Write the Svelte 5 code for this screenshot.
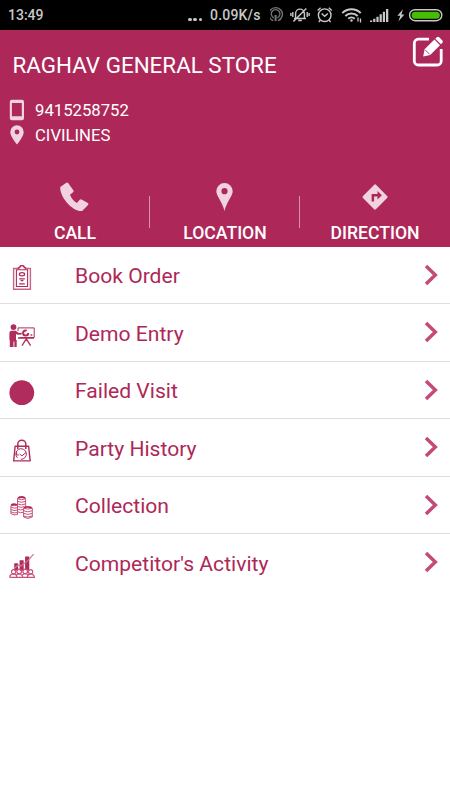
<script lang="ts">
interface MenuItem {
  icon: string;
  label: string;
}

const actions = ['CALL', 'LOCATION', 'DIRECTION'];

const items: MenuItem[] = [
  { icon: 'order', label: 'Book Order' },
  { icon: 'demo', label: 'Demo Entry' },
  { icon: 'failed', label: 'Failed Visit' },
  { icon: 'history', label: 'Party History' },
  { icon: 'collection', label: 'Collection' },
  { icon: 'activity', label: "Competitor's Activity" },
];
</script>

<main class="screen">
  <div class="status">
    <span class="time">13:49</span>
    <span class="dots"><i></i><i></i><i></i></span>
    <span class="speed">0.09K/s</span>
    <svg class="status-icons" width="180" height="30" viewBox="0 0 180 30" fill="none" stroke="#c8c8c8" aria-hidden="true">
      <g stroke="#777" stroke-width="1.3">
        <path d="M3.2 20.7a6.8 6.8 0 1 1 4.8 0M3.8 17.8a4.3 4.3 0 1 1 3.6 0" />
        <path d="M5.6 15v6" stroke-width="2" />
      </g>
      <g stroke-width="1.4">
        <path d="M24 18.5h12M25.6 18v-4.5a4.4 4.4 0 0 1 8.8 0V18M28.2 20.5h3.6M23.4 21.5 36.3 8.5" />
        <path d="M22.8 12v5M37.2 12v5M20.9 13v3M39.1 13v3" />
      </g>
      <g stroke-width="1.4">
        <circle cx="54.7" cy="15.2" r="6.3" />
        <path d="m51.6 13.4 3.1 2.8 3.1-2.8M47.6 10.4l3-2.7M61.8 10.4l-3-2.7M50.3 20.3l-1.5 1.6M59.1 20.3l1.5 1.6" />
      </g>
      <g stroke-width="2">
        <path d="M72.3 13.1a13 13 0 0 1 18.4 0M75.3 16a8.8 8.8 0 0 1 12.4 0M78.3 18.8a4.6 4.6 0 0 1 6.4 0" />
        <circle cx="81.5" cy="20.5" r="1.2" fill="#c8c8c8" stroke="none" />
        <path d="M88 17.5v4M90.5 18.5v4" stroke-width="1.3" />
      </g>
      <g fill="#c8c8c8" stroke="none">
        <path d="M100 20.5h2.2V22H100zM103.2 18.7h2.2V22h-2.2zM106.4 16.7h2.2V22h-2.2zM109.6 14.3h2.2V22h-2.2zM112.8 11.7h2.2V22h-2.2zM116 9h2.3v13H116z" />
        <path d="m133 9.2-5.6 6.5h2.9l-1.9 5.7 6-7h-3z" />
      </g>
      <rect x="139.6" y="9.7" width="32.2" height="11" rx="5.5" stroke-width="1.4" />
      <rect x="141.6" y="11.7" width="28.2" height="7" rx="3.5" fill="#48bd05" stroke="none" />
    </svg>
  </div>

  <header class="header">
    <div class="title-row">
      <h1>RAGHAV GENERAL STORE</h1>
      <svg class="edit" width="32" height="32" viewBox="0 0 32 32" aria-hidden="true">
        <path d="M17 3.2H6.3a4 4 0 0 0-4 4V25a4 4 0 0 0 4 4h18.9a4 4 0 0 0 4-4V13" fill="none" stroke="#fff" stroke-width="2.8" />
        <path d="m11.2 20.5 1.4-7.2L22.4 3.6l5.6 5.6-9.8 9.8zM23.3 2.7l1.5-1.5q1.2-1 2.4 0l3.2 3.2q1 1.2 0 2.4l-1.5 1.5z" fill="#fff" />
        <path d="m13.3 14 4.4 4.4" stroke="#ad2858" stroke-width=".9" />
      </svg>
    </div>

    <div class="contact">
      <div class="contact-row">
        <svg width="16" height="22" viewBox="0 0 16 22" aria-hidden="true">
          <path fill-rule="evenodd" d="M2.8.8h10.2a2 2 0 0 1 2 2v16.4a2 2 0 0 1-2 2H2.8a2 2 0 0 1-2-2V2.8a2 2 0 0 1 2-2zM2.9 4v13.3h9.9V4z" />
        </svg>
        <span>9415258752</span>
      </div>
      <div class="contact-row">
        <svg width="16" height="22" viewBox="0 0 16 22" aria-hidden="true">
          <path fill-rule="evenodd" d="M8 1.3a6.7 6.7 0 0 0-6.7 6.7C1.3 13 8 20.4 8 20.4S14.7 13 14.7 8A6.7 6.7 0 0 0 8 1.3zm0 4.3a2.4 2.4 0 1 1 0 4.8 2.4 2.4 0 0 1 0-4.8z" />
        </svg>
        <span>CIVILINES</span>
      </div>
    </div>

    <nav class="actions">
      {#each actions as action}
        <button class="action" type="button">
          <svg width="32" height="32" viewBox="0 0 32 32" aria-hidden="true">
            {#if action === 'CALL'}
              <path d="m7.3 1.7-6 4.2c-.9 9.3 11.7 24.7 21.9 24.1l5.8-6c.6-.7.5-1.5-.2-2l-6.3-3.4q-1-.6-1.8.2l-2.8 3.1c-3.1-1.7-5.7-5-6.9-8.2l3-2.4q1-.8.5-1.9L9.1 2q-.6-1-1.8-.3z" />
            {:else if action === 'LOCATION'}
              <path fill-rule="evenodd" d="M15.5 2a8.2 8.2 0 0 0-8.2 8.2c0 4.8 5.8 9.8 8.2 19.8 2.4-10 8.2-15 8.2-19.8A8.2 8.2 0 0 0 15.5 2zm0 5.1a3.1 3.1 0 1 1 0 6.2 3.1 3.1 0 0 1 0-6.2z" />
            {:else}
              <path fill-rule="evenodd" d="m17.2 3.9 10.9 11q1.1 1.1 0 2.2l-11 11q-1.1 1.1-2.2 0L4 17.1q-1.1-1.1 0-2.2l11-11q1.1-1.1 2.2 0zM12.6 13v7.5h2.5v-5h3.4v3l4.4-4.3-4.4-4.3V13z" />
            {/if}
          </svg>
          <span>{action}</span>
        </button>
      {/each}
    </nav>
  </header>

  <ul class="menu">
    {#each items as item}
      <li>
        <svg class="icon" width="28" height="28" viewBox="0 0 28 28" fill="none" stroke="#b02c5c" aria-hidden="true">
          {#if item.icon === 'order'}
            <path d="M9.5 3.5H5.6v20.8h16.8V3.5h-3.7" stroke="#c76587" stroke-width="1.4" />
            <path d="M10 4.8H8.4v16.7h11.2V4.8H18M10 4.8h8" stroke-width="1.1" />
            <path d="M10.3 4.4V3q1.5 0 2-1.7 1.7-1.7 3.4 0Q16.2 3 17.7 3v1.4" stroke-width="1.6" />
            <ellipse cx="14" cy="9.3" rx="2.6" ry="1.6" stroke-width="1.3" />
            <path d="M11.2 13.8h5.6M12.6 15.7h2.8M11.2 18.8h5.6" stroke-width="1.2" />
          {:else if item.icon === 'demo'}
            <g fill="#b02c5c" stroke="none">
              <circle cx="5.5" cy="4.1" r="2.9" />
              <path d="M1.4 10q0-2.2 2.3-2.2h4.1l2.9 2.3 3-.4v1.7l-4 .4-1.7-.9V17h.7v7H6.4v-5.5h-.9V24H1.8v-7h-.4z" />
            </g>
            <path d="M10 4.9h16.2v9.6H11.8M10 4.9v3" />
            <path d="M10 15h16M18.3 15v2M18 16.4l-4 6.2M18.6 16.4l4 6.2" stroke-width="1.3" />
            <circle cx="17.7" cy="10" r="2.6" stroke-width="2" stroke-dasharray="13 3.3" />
            <path d="M22.6 12h1.7" stroke-width="1.5" />
          {:else if item.icon === 'failed'}
            <circle cx="13.8" cy="12.7" r="12.4" fill="#b02c5c" stroke="none" />
          {:else if item.icon === 'history'}
            <path d="M7.1 8.2h13.5l1.6 14.7H5.7z" stroke-width="1.4" stroke-linejoin="round" />
            <path d="M9.8 11V6.2a4 4 0 0 1 8 0V11" stroke-width="1.5" />
            <path d="M9.4 19.8a5.3 5.3 0 1 1 3.4 1.5M8.6 14v3h2.2M11.6 16l2.4 1.8 4-3.4" stroke-width="1" />
          {:else if item.icon === 'collection'}
            <g stroke-width="1">
              <path d="M9.5 3.2v16.2M17.6 3.2v8M2.9 10.7v8q3 2 6.7.8M2.9 10.7l6.6-.7M9.5 3.7q4 2 8 0M9.5 6.3q4 2 8 0M9.5 8.9q4 2 8 0M9.5 11.4q4 2 7 0M9.5 14q3 1.7 6 .5M9.5 16.7q3 1.7 6 .5M2.9 12q3 2 6.6.7M2.9 14.4q3 2 6.6.7M2.9 16.8q3 2 6.6.7" stroke="#c8527a" />
              <path d="M15.6 13v9q4 3 8.7 0v-9M15.6 13q4 2.3 8.7 0M15.6 15.7q4 2.3 8.7 0M15.6 18.3q4 2.3 8.7 0M15.6 20.9q4 2.3 8.7 0" stroke="#c8527a" />
              <path d="M10 3q3.5-2 7.2 0M3.2 10q2.7-1.5 5.8 0M16 12.8q3.5-2 7.8 0" stroke-width="1.8" />
            </g>
          {:else}
            <g fill="#b02c5c" stroke="none">
              <path d="M6.2 10.2h3.9v7.3H6.2zM11.6 7.3h4.1v10.4h-4.1zM17.1 3.6h4.2V17h-4.2z" />
            </g>
            <path d="M6 15.5 10.3 12l2.6 1 7.3-5.6 5.4-6.2" stroke="#d17895" stroke-width="1.2" />
            <g stroke="#c8527a" stroke-width="1.2">
              <circle cx="5.6" cy="18.8" r="2.1" />
              <circle cx="11.2" cy="18.4" r="2.3" />
              <circle cx="17.2" cy="18.4" r="2.3" />
              <circle cx="22.6" cy="18.8" r="2.1" />
              <path d="M1.6 24.4q.2-3 3.8-3.5 3.2.1 3.5 3.5H1.6M8.2 22.2q3-2.6 6 .4l.7 1.8H9M14.2 22.2q3-3 6 0M15.1 24.4h4.5M19.2 24.4q.3-3 3.4-3.5 3.6.5 3.8 3.5h-7.2" />
            </g>
          {/if}
        </svg>
        <span class="label">{item.label}</span>
        <svg class="chevron" width="16" height="22" viewBox="0 0 16 22" aria-hidden="true">
          <path d="m3 2 9.3 9L3 20" fill="none" stroke="#c44b79" stroke-width="3.5" />
        </svg>
      </li>
    {/each}
  </ul>
</main>

<style>
  :global(body) {
    margin: 0;
    background: #fff;
  }

  .screen {
    width: 450px;
    height: 800px;
    overflow: hidden;
    background: #fff;
    font-family: Roboto, sans-serif;
  }

  .status {
    display: flex;
    align-items: center;
    height: 30px;
    background: #000;
    color: #c8c8c8;
    font-size: 14px;
    font-weight: 500;
  }

  .time {
    width: 180px;
    padding-left: 8px;
  }

  .dots {
    display: flex;
    gap: 1.8px;
    width: 22px;
    padding-top: 9px;
  }

  .dots i {
    width: 3.6px;
    height: 3.6px;
    border-radius: 50%;
    background: #c8c8c8;
  }

  .speed {
    width: 60px;
    letter-spacing: 0.2px;
  }

  .status-icons {
    flex-shrink: 0;
  }

  .header {
    display: flex;
    flex-direction: column;
    height: 216.5px;
    background: #ad2858;
    color: #fff;
  }

  .title-row {
    display: flex;
    justify-content: space-between;
    align-items: flex-start;
    height: 66px;
    padding: 6px 6px 0 12.5px;
    box-sizing: border-box;
  }

  h1 {
    margin: 16px 0 0;
    font-size: 22.4px;
    font-weight: 400;
    line-height: 27px;
    white-space: nowrap;
  }

  .contact {
    height: 84px;
  }

  .contact-row {
    display: flex;
    align-items: center;
    gap: 10px;
    height: 25px;
    padding: 2px 0 0 9px;
    box-sizing: border-box;
    font-size: 16.7px;
  }

  .contact-row span {
    padding-top: 1px;
  }

  .contact-row svg,
  .action svg {
    fill: #f0d3df;
  }

  .actions {
    display: grid;
    grid-template-columns: repeat(3, 1fr);
  }

  .action {
    display: flex;
    flex-direction: column;
    align-items: center;
    height: 66px;
    padding: 1px 0 0;
    border: 0;
    background: linear-gradient(#d592ab, #d592ab) right 16px / 1.3px 32px no-repeat;
    color: #fff;
    font-family: inherit;
    font-size: 17.6px;
    font-weight: 500;
  }

  .action:last-child {
    background: none;
  }

  .action span {
    margin-top: 9px;
    line-height: 22px;
  }

  .menu {
    margin: 0;
    padding: 0;
    list-style: none;
  }

  li {
    display: flex;
    align-items: center;
    height: 57.5px;
    padding: 0 11.5px 0 8px;
    box-sizing: border-box;
    border-bottom: 1px solid #dedede;
  }

  li:last-child {
    border-bottom-color: transparent;
  }

  .icon {
    margin-top: 8.5px;
  }

  .label {
    flex: 1;
    padding: 2.5px 0 0 39px;
    color: #ad2858;
    font-size: 21.1px;
    line-height: 26px;
  }
</style>
